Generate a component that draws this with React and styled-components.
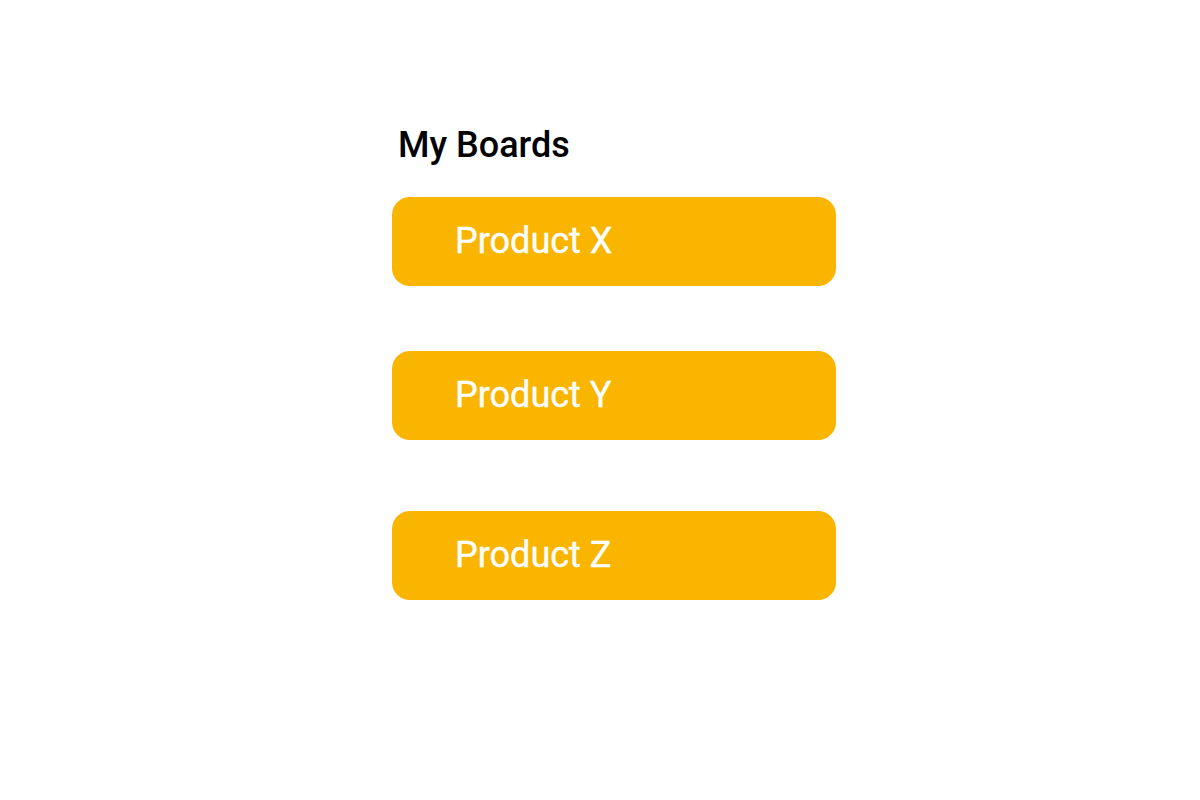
import React from "react";
import styled, { createGlobalStyle } from "styled-components";

const GlobalStyle = createGlobalStyle`
  html, body {
    margin: 0;
    padding: 0;
    background: #ffffff;
    font-family: Roboto, "Noto Sans", sans-serif;
  }
`;

const Page = styled.div`
  width: 1200px;
  height: 800px;
  display: flex;
  justify-content: flex-start;
  padding-left: 392px;
  padding-top: 124px;
  box-sizing: border-box;
`;

const Boards = styled.section`
  width: 444px;
  display: flex;
  flex-direction: column;
`;

const Title = styled.h1`
  margin: 0 0 31px 6px;
  font-size: 36px;
  font-weight: 500;
  line-height: 42px;
  color: #000000;
`;

const Card = styled.div`
  height: 89px;
  margin-top: ${(p) => p.$gap}px;
  border-radius: 18px;
  background: #f9b500;
  display: flex;
  align-items: center;
  padding-left: 63px;
  padding-bottom: 2px;
  box-sizing: border-box;
  color: #ffffff;
  font-size: 36px;
  font-weight: 400;
  -webkit-text-stroke: 0.4px #ffffff;
`;

const boards = [
  { name: "Product X", gap: 0 },
  { name: "Product Y", gap: 65 },
  { name: "Product Z", gap: 71 },
];

export default function App() {
  return (
    <>
      <GlobalStyle />
      <Page>
        <Boards>
          <Title>My Boards</Title>
          {boards.map((b) => (
            <Card key={b.name} $gap={b.gap}>
              {b.name}
            </Card>
          ))}
        </Boards>
      </Page>
    </>
  );
}
